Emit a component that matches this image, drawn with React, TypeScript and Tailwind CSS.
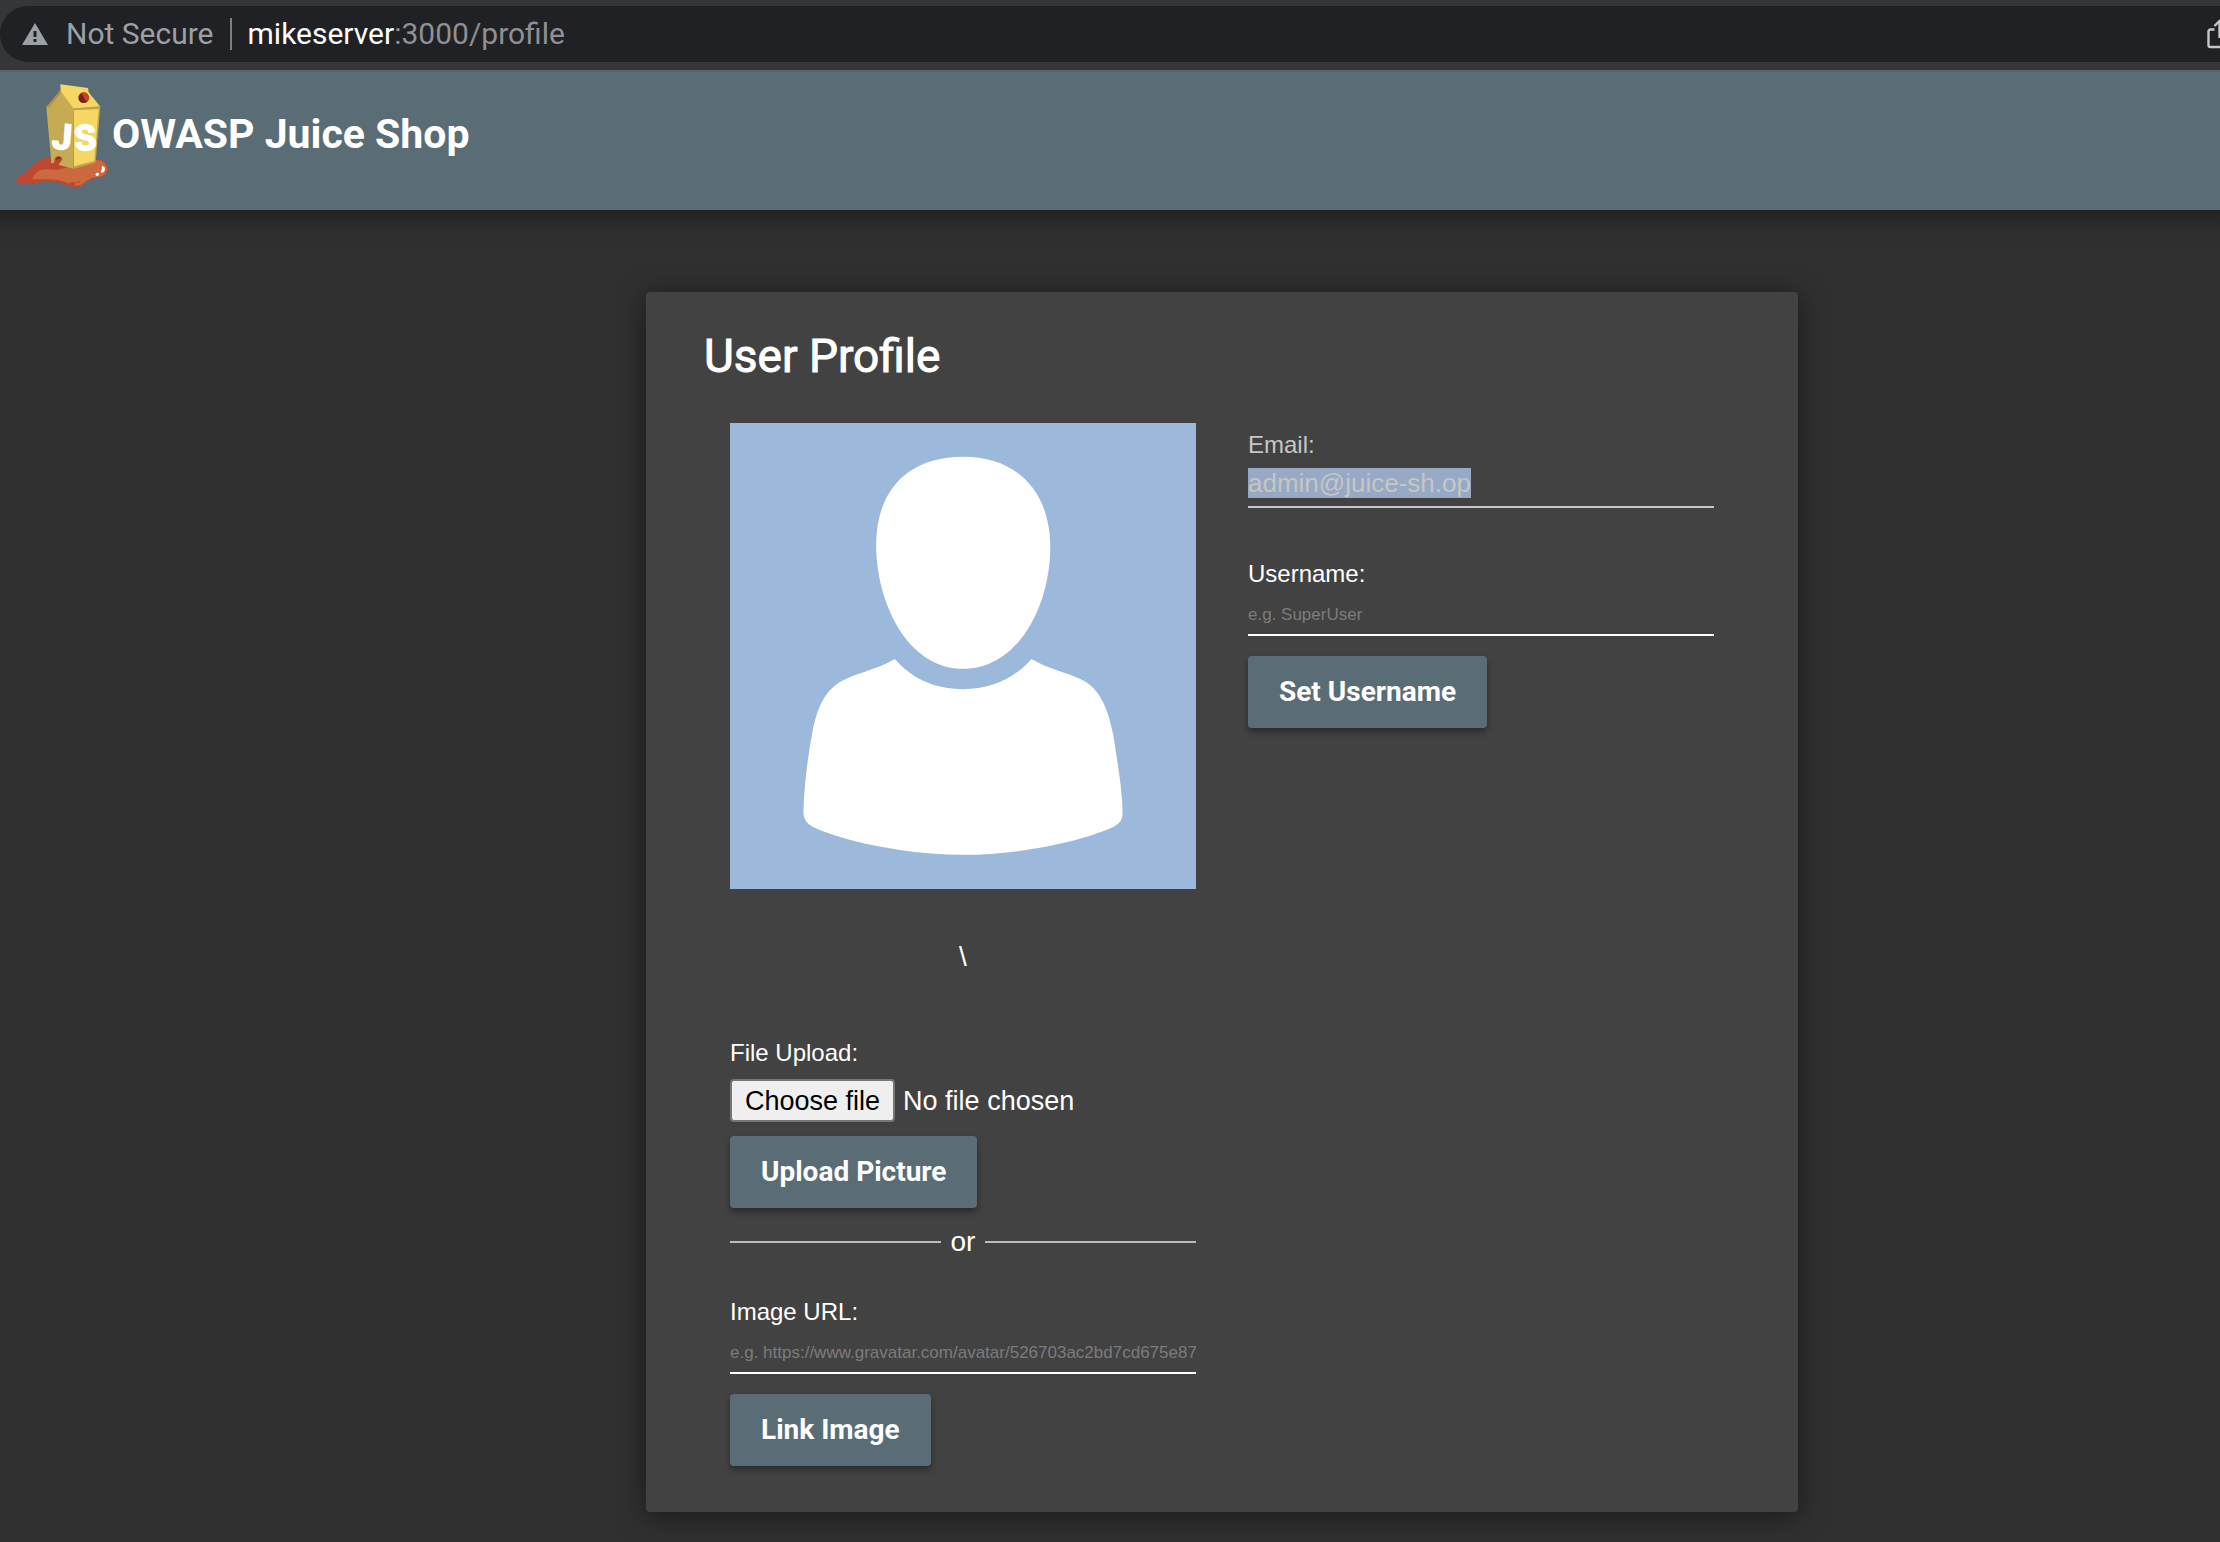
import type { ReactNode } from "react";

function BrowserBar() {
  return (
    <div className="relative z-10 overflow-hidden border-b-2 border-[#5f6064] bg-[#35363a] pt-1.5 pb-2">
      <div className="flex h-14 items-center rounded-l-full bg-[#202124] pl-[22px] font-['Roboto',sans-serif] text-[30px] leading-8">
        <svg viewBox="0 0 26 22" className="h-[22px] w-[26px] shrink-0" aria-hidden="true">
          <path d="M13 0 26 22H0Z" fill="#9aa0a6" />
          <path d="M11.5 8h3v6h-3zM11.5 16h3v3h-3z" fill="#202124" />
        </svg>
        <span className="ml-[18px] text-[#9aa0a6]">Not Secure</span>
        <span className="ml-4 h-8 w-0.5 bg-[#7d7f83]" />
        <span className="ml-4 text-[#8f9093]">
          <span className="text-white">mikeserver</span>:3000/profile
        </span>
        <button type="button" aria-label="Share" className="-mr-3 ml-auto shrink-0">
          <svg viewBox="0 0 25 30" className="h-[30px] w-[25px]" fill="none" stroke="#c4c6c9" strokeWidth="2.4">
            <path d="M7.500 10.500H3.500a2 2 0 0 0-2 2V26a2 2 0 0 0 2 2H21.500a2 2 0 0 0 2-2V12.500a2 2 0 0 0-2-2H17.500" />
            <path d="M12.500 19V2.500M7.500 7l5-5 5 5" />
          </svg>
        </button>
      </div>
    </div>
  );
}

function JuiceLogo() {
  return (
    <svg viewBox="48 42 276 312" className="h-[104px] w-[92px] shrink-0" aria-hidden="true">
      <path
        d="M49 330C52 318 68 314 82 303C96 289 108 276 122 269C140 261 152 262 170 264L290 266C310 268 324 282 323 298C322 316 304 324 284 325C262 327 254 348 232 351C206 353 196 340 168 336C128 332 86 344 62 341C53 340 48 337 49 330Z"
        fill="#c0472f"
      />
      <path
        d="M96 326C106 312 110 302 128 299C150 296 168 302 184 297L288 270C308 270 322 284 321 298C319 315 304 321 284 322C262 325 252 345 232 347C210 346 202 334 172 330C144 326 118 330 96 326Z"
        fill="#cc693e"
      />
      <ellipse cx="217" cy="341" rx="10" ry="5" fill="#c0472f" />
      <ellipse cx="234" cy="336" rx="5" ry="2" fill="#c0472f" />
      <path d="M139 111 181 62 221 117V296L154 279Z" fill="#c4ab54" />
      <path d="M139 111 181 60 184 66 146 113Z" fill="#b58a48" />
      <path d="M181 43 264 54 266 67 301 110 221 117 182 66Z" fill="#f7d763" />
      <path d="M219 115 301 109 287 278 221 296Z" fill="#c0a24a" />
      <path d="M222 121 296 117 283 273 222 289Z" fill="#f7d763" />
      <path d="M182 63 221 117" stroke="#d8b752" strokeWidth="3" fill="none" />
      <circle cx="251" cy="83" r="16" fill="#722216" />
      <path d="M244 70C253 63 268 72 267 86L259 95Z" fill="#c8402b" />
      <path d="M163 277C162 264 169 258 178 259C189 261 189 272 181 276L170 294H144Z" fill="#bd442d" />
      <path d="M168 269C169 260 180 258 182 264Z" fill="#79301f" />
      <path d="M305 289C315 287 319 298 310 307L303 308C302 302 308 299 305 289Z" fill="#fff" />
      <circle cx="292" cy="313" r="5" fill="#fff" />
      <g fill="#fff" stroke="#fff" strokeWidth="5" className="font-['Roboto',sans-serif] text-[106px] font-bold">
        <text x="157" y="238" transform="rotate(4 190 200)">J</text>
        <text x="223" y="240" transform="rotate(-5 255 200)">S</text>
      </g>
    </svg>
  );
}

function Avatar() {
  return (
    <svg
      viewBox="261 373 1218 1145"
      preserveAspectRatio="none"
      className="aspect-square w-full bg-[#9cb9dc]"
      fill="#fff"
      role="img"
      aria-label="Profile picture"
    >
      <path d="M870 456C1015 456 1098 545 1098 678C1098 820 1015 977 870 977C725 977 643 815 643 672C643 545 720 456 870 456Z" />
      <path d="M692 953C735 1000 795 1027 870 1027C945 1027 1005 1000 1049 953C1100 980 1130 983 1172 1000C1225 1020 1248 1070 1263 1140C1275 1215 1287 1280 1287 1330C1287 1362 1265 1366 1200 1388C1100 1417 980 1434 870 1434C760 1434 640 1417 540 1388C475 1366 453 1362 453 1325C455 1260 465 1190 477 1130C490 1065 515 1020 568 1000C610 983 640 980 692 953Z" />
    </svg>
  );
}

function ActionButton({ children }: { children: ReactNode }) {
  return (
    <button
      type="button"
      className="block h-[72px] rounded-sm bg-[#5a6d77] px-[31px] font-['Roboto',sans-serif] text-[28px] leading-8 font-bold text-white shadow-[0_4px_6px_rgba(0,0,0,0.35)]"
    >
      {children}
    </button>
  );
}

const fieldLabel = "block text-2xl leading-7";
const placeholderInput =
  "block h-[38px] w-full border-b-2 border-white bg-transparent pb-0.5 text-[17px] text-white outline-none placeholder:text-[#7c7c7c] placeholder:opacity-100";

export default function App() {
  return (
    <div className="min-h-screen bg-[#303030] font-['Liberation_Sans',Arial,sans-serif] text-white">
      <BrowserBar />
      <header className="flex h-[138px] bg-[#5a6d77] pt-3 pl-4 shadow-[0_-16px_24px_20px_rgba(0,0,0,0.5)]">
        <JuiceLogo />
        <span className="mt-[26px] ml-1 font-['Roboto',sans-serif] text-[41px] leading-12 font-bold">
          OWASP Juice Shop
        </span>
      </header>
      <main className="flex justify-center pt-[82px] pb-[30px] pl-56">
        <section className="w-full max-w-[1152px] rounded-sm bg-[#424242] px-[58px] pt-8 pb-[46px] shadow-[0_4px_28px_rgba(0,0,0,0.5)]">
          <h1 className="font-['Roboto',sans-serif] text-[46px] leading-[64px] font-normal [-webkit-text-stroke:1px_white]">
            User Profile
          </h1>
          <div className="grid grid-cols-2 gap-[52px] px-[26px] pt-[35px]">
            <div>
              <Avatar />
              <p className="mt-[52px] text-center text-[28px] leading-8">\</p>
              <form className="mt-[66px]">
                <label htmlFor="file" className={fieldLabel}>
                  File Upload:
                </label>
                <input id="file" type="file" className="sr-only" />
                <label htmlFor="file" className="mt-3 flex items-center gap-2 text-[27px] leading-8">
                  <span className="flex h-[43px] items-center rounded-sm border-2 border-[#767676] bg-[#efefef] px-[13px] text-black">
                    Choose file
                  </span>
                  No file chosen
                </label>
                <div className="mt-3.5">
                  <ActionButton>Upload Picture</ActionButton>
                </div>
              </form>
              <div className="mt-[18px] flex items-center gap-2.5 text-[28px] leading-8">
                <span className="h-0.5 flex-1 bg-[#bdbdbd]" />
                or
                <span className="h-0.5 flex-1 bg-[#bdbdbd]" />
              </div>
              <form className="mt-10">
                <label htmlFor="url" className={fieldLabel}>
                  Image URL:
                </label>
                <input
                  id="url"
                  type="text"
                  placeholder="e.g. https://www.gravatar.com/avatar/526703ac2bd7cd675e872393a0744bf5"
                  className={placeholderInput + " mt-2.5 mb-5"}
                />
                <ActionButton>Link Image</ActionButton>
              </form>
            </div>
            <form className="pt-2">
              <div className="border-b-2 border-[#c6c6c6] pb-2 text-[#c6c6c6]">
                <label htmlFor="email" className={fieldLabel}>
                  Email:
                </label>
                <input
                  id="email"
                  type="email"
                  disabled
                  value="admin@juice-sh.op"
                  className="mt-[9px] block h-[30px] [field-sizing:content] bg-[#97a9c4] text-[26px] leading-[30px]"
                />
              </div>
              <label htmlFor="username" className={fieldLabel + " mt-[52px]"}>
                Username:
              </label>
              <input id="username" type="text" placeholder="e.g. SuperUser" className={placeholderInput + " mt-2.5 mb-5"} />
              <ActionButton>Set Username</ActionButton>
            </form>
          </div>
        </section>
      </main>
    </div>
  );
}
